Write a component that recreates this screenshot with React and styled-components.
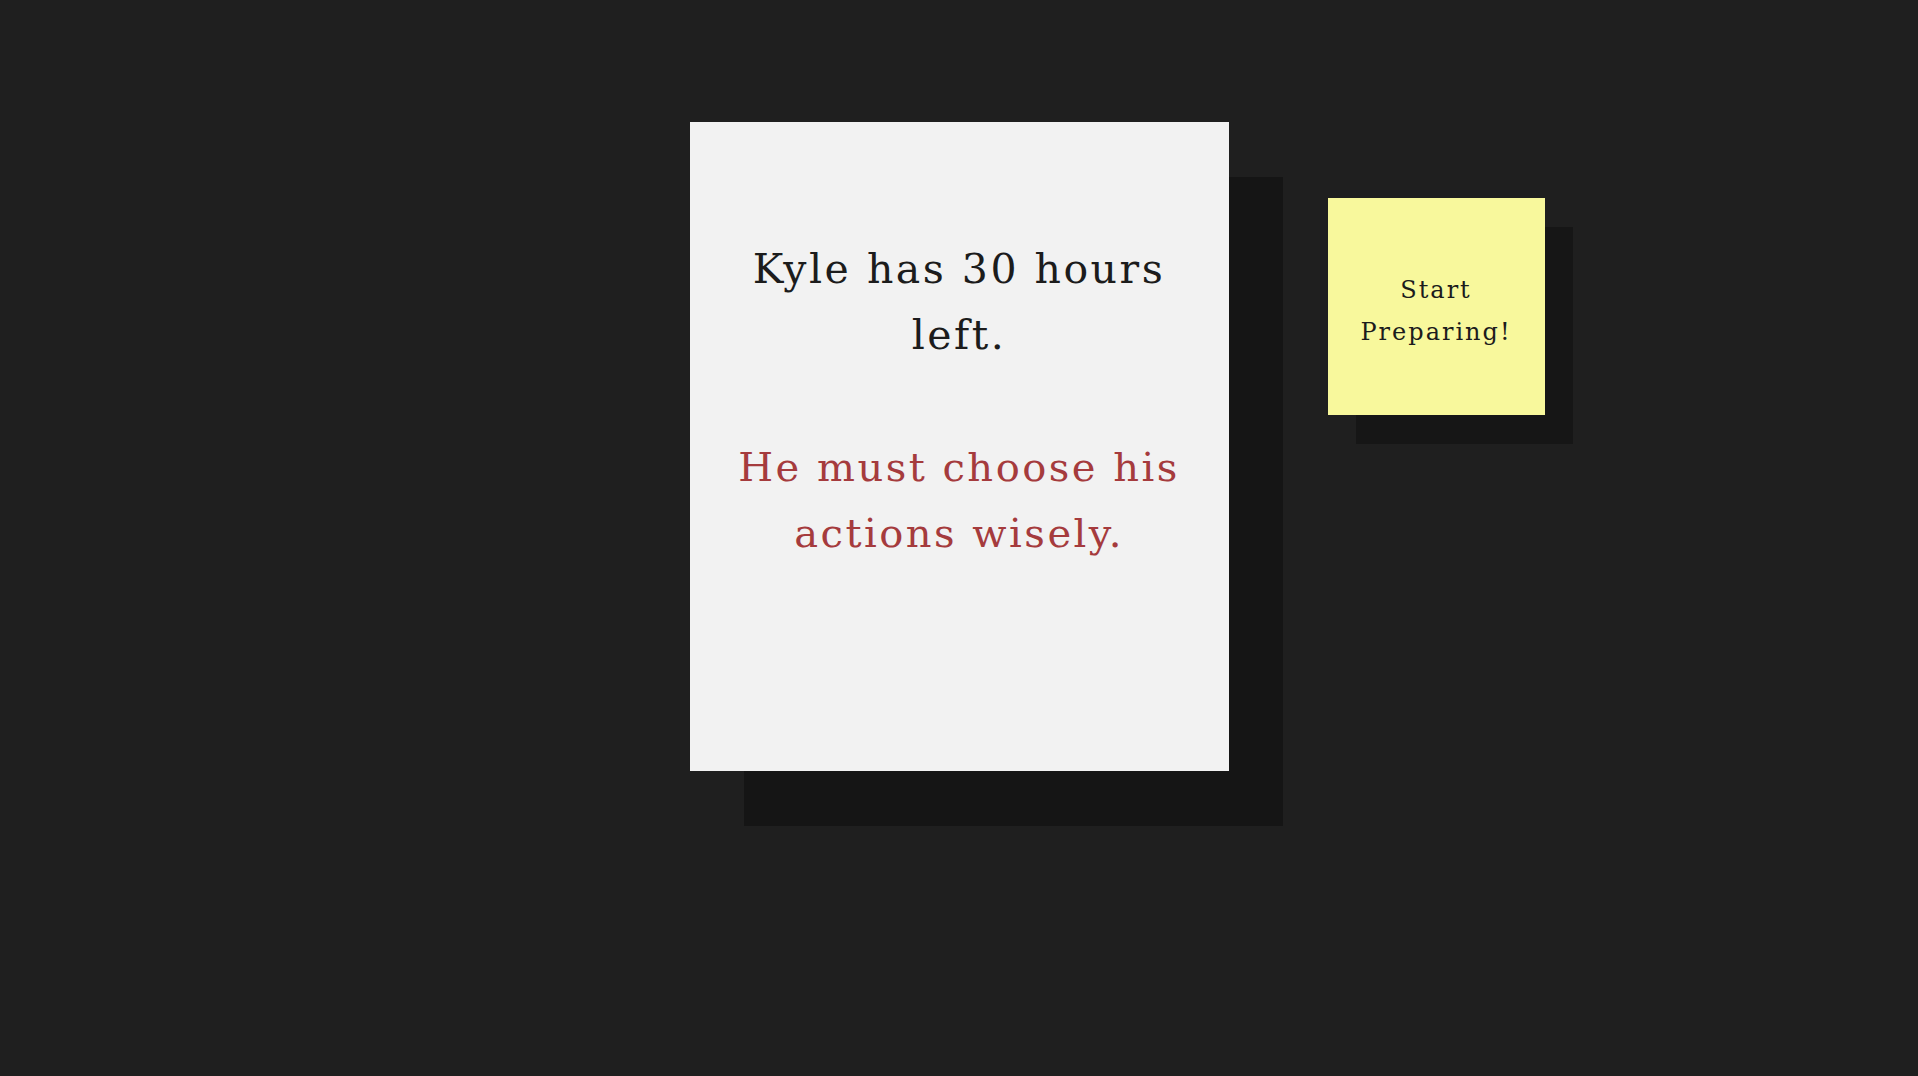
import styled, { createGlobalStyle } from "styled-components";

const GlobalStyle = createGlobalStyle`
  html, body {
    margin: 0;
    padding: 0;
    background-color: #1f1f1f;
  }
  #root {
    min-height: 100vh;
  }
`;

const Page = styled.div`
  width: 100%;
  min-height: 100vh;
  background-color: #1f1f1f;
  display: grid;
  grid-template-columns: 1fr auto 1fr;
  align-items: start;
  padding-top: 122px;
  box-sizing: border-box;
  font-family: "DejaVu Serif", "Liberation Serif", serif;
`;

const Card = styled.div`
  grid-column: 2;
  width: 539px;
  height: 649px;
  box-sizing: border-box;
  background-color: #f2f2f2;
  box-shadow: 54px 55px 0 #151515;
  padding: 114px 40px 0;
  text-align: center;
`;

const Line = styled.p`
  margin: 0 0 66px;
  font-size: ${(p) => (p.$red ? "40px" : "41px")};
  line-height: 66px;
  letter-spacing: 2.5px;
  color: ${(p) => (p.$red ? "#a53b3d" : "#1c1c1c")};
`;

const Side = styled.div`
  grid-column: 3;
  padding: 76px 0 0 99px;
`;

const Sticky = styled.button`
  width: 217px;
  height: 217px;
  border: none;
  background-color: #f8f89c;
  box-shadow: 28px 29px 0 #161616;
  display: flex;
  align-items: center;
  justify-content: center;
  font-family: inherit;
  font-size: 24px;
  line-height: 42px;
  letter-spacing: 2px;
  color: #1c1c1c;
  cursor: pointer;
  padding: 8px 0 0;
`;

export default function App() {
  return (
    <>
      <GlobalStyle />
      <Page>
        <Card>
          <Line>Kyle has 30 hours left.</Line>
          <Line $red>He must choose his actions wisely.</Line>
        </Card>
        <Side>
          <Sticky>
            Start
            <br />
            Preparing!
          </Sticky>
        </Side>
      </Page>
    </>
  );
}
